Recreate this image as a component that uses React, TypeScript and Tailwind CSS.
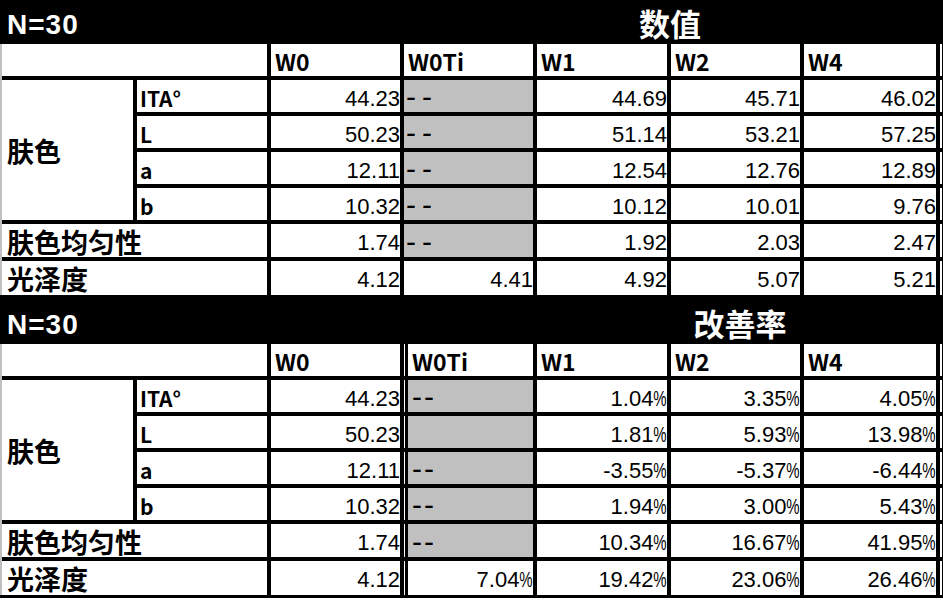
const LAT = "font-['Liberation_Sans',sans-serif]";
const CJK = "font-['Noto_Sans_CJK_SC',sans-serif] font-bold";
const COLS = "grid-cols-[131px_130px_129px_129px_130px_129px_132px_3px]";
const DOUBLE = "shadow-[inset_1px_0_0_#fff,inset_4px_0_0_#000]";

type Row = { label: string; w0: string; ti: string; gray: boolean; rest: string[] };

const skin = ["ITA°", "L", "a", "b"];

const valueRows: Row[] = [
  { label: "ITA°", w0: "44.23", ti: "--", gray: true, rest: ["44.69", "45.71", "46.02"] },
  { label: "L", w0: "50.23", ti: "--", gray: true, rest: ["51.14", "53.21", "57.25"] },
  { label: "a", w0: "12.11", ti: "--", gray: true, rest: ["12.54", "12.76", "12.89"] },
  { label: "b", w0: "10.32", ti: "--", gray: true, rest: ["10.12", "10.01", "9.76"] },
  { label: "肤色均匀性", w0: "1.74", ti: "--", gray: true, rest: ["1.92", "2.03", "2.47"] },
  { label: "光泽度", w0: "4.12", ti: "4.41", gray: false, rest: ["4.92", "5.07", "5.21"] },
];

const rateRows: Row[] = [
  { label: "ITA°", w0: "44.23", ti: "--", gray: true, rest: ["1.04%", "3.35%", "4.05%"] },
  { label: "L", w0: "50.23", ti: "", gray: true, rest: ["1.81%", "5.93%", "13.98%"] },
  { label: "a", w0: "12.11", ti: "--", gray: true, rest: ["-3.55%", "-5.37%", "-6.44%"] },
  { label: "b", w0: "10.32", ti: "--", gray: true, rest: ["1.94%", "3.00%", "5.43%"] },
  { label: "肤色均匀性", w0: "1.74", ti: "--", gray: true, rest: ["10.34%", "16.67%", "41.95%"] },
  { label: "光泽度", w0: "4.12", ti: "7.04%", gray: false, rest: ["19.42%", "23.06%", "26.46%"] },
];

function Num({ v, extra = "" }: { v: string; extra?: string }) {
  const pct = v.endsWith("%");
  return (
    <div
      className={`bg-white flex justify-end pt-[8px] pr-0 text-[22px] leading-none text-black ${LAT} ${extra}`}
    >
      {pct ? (
        <span>
          {v.slice(0, -1)}
          <span className="inline-block ml-[-6px] scale-x-[0.68] origin-right">%</span>
        </span>
      ) : (
        v
      )}
    </div>
  );
}

function Extra() {
  return <div className="bg-white border-r border-black" />;
}

function Section({ title, second }: { title: string; second: boolean }) {
  const rows = second ? rateRows : valueRows;
  return (
    <div>
      <div className={`h-[44px] bg-black grid ${COLS} gap-x-[4px] pl-[2px]`}>
        <div className={`col-span-3 pl-[5px] pt-[11px] text-[28px] leading-none font-bold tracking-[1px] text-white ${LAT}`}>
          N=30
        </div>
        <div
          className={`${second ? "col-start-5" : "col-start-4"} col-span-4 flex items-center justify-center text-[31px] leading-none text-white ${CJK}`}
        >
          {title}
        </div>
      </div>
      <div className="flex">
        <div className="w-[2px] bg-[#c0c0c0]" />
        <div
          className={`grid ${COLS} grid-rows-[32px_32px_32px_32px_32px_33px_34px] gap-[4px] bg-black`}
        >
          <div className="col-span-2 bg-white" />
          {["W0", "W0Ti", "W1", "W2", "W4"].map((h) => (
            <div
              key={h}
              className={`bg-white pt-[6px] text-[23px] leading-none text-black ${CJK} ${
                h === "W0Ti" && second ? `${DOUBLE} pl-[8px]` : "pl-[4px]"
              }`}
            >
              {h}
            </div>
          ))}
          <Extra />

          {rows.map((r, i) => {
            const isSkin = skin.includes(r.label);
            return [
              i === 0 ? (
                <div
                  key={`g${i}`}
                  className={`row-span-4 bg-white flex items-center pl-[5px] text-[27px] leading-none text-black ${CJK}`}
                >
                  肤色
                </div>
              ) : null,
              isSkin ? (
                <div
                  key={`l${i}`}
                  className={`bg-white pl-[3px] pt-[8px] text-[21px] leading-none text-black ${CJK}`}
                >
                  {r.label}
                </div>
              ) : (
                <div
                  key={`l${i}`}
                  className={`col-span-2 bg-white pl-[5px] pt-[4px] text-[27px] leading-none text-black ${CJK}`}
                >
                  {r.label}
                </div>
              ),
              <Num key={`w${i}`} v={r.w0} />,
              r.ti === "--" || r.ti === "" ? (
                <div
                  key={`t${i}`}
                  className={`${r.gray ? "bg-[#c0c0c0]" : "bg-white"} flex items-end text-[30px] leading-none text-black ${LAT} ${
                    second ? `${DOUBLE} pl-[8px] tracking-[2px]` : "pl-[2px] tracking-[6px]"
                  }`}
                >
                  {r.ti}
                </div>
              ) : (
                <Num key={`t${i}`} v={r.ti} extra={second ? DOUBLE : ""} />
              ),
              ...r.rest.map((v, j) => <Num key={`r${i}${j}`} v={v} />),
              <Extra key={`e${i}`} />,
            ];
          })}
        </div>
      </div>
      <div className={second ? "h-[3px] bg-black" : "h-[5px] bg-black"} />
    </div>
  );
}

export default function App() {
  return (
    <div className="w-[943px] h-[600px] bg-white overflow-hidden">
      <Section title="数值" second={false} />
      <Section title="改善率" second={true} />
    </div>
  );
}
